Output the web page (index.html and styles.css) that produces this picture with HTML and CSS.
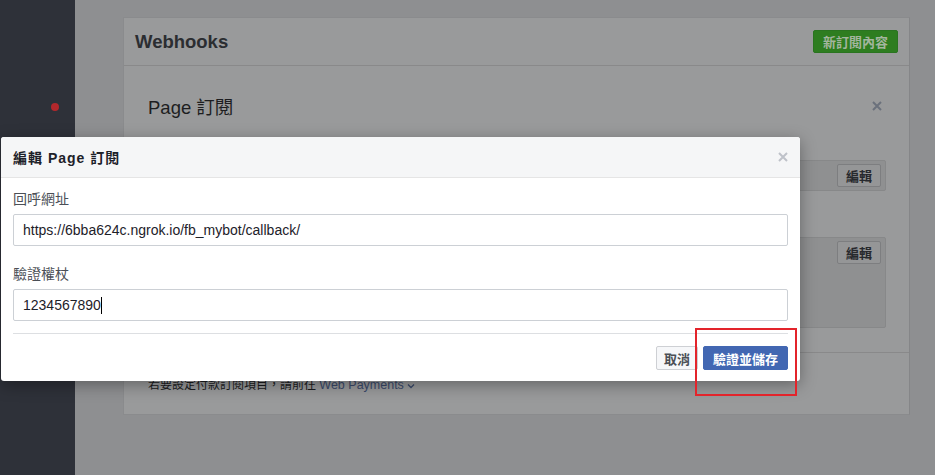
FILE: index.html
```html
<!DOCTYPE html>
<html lang="zh-Hant">

<head>
    <meta charset="UTF-8">
    <meta name="viewport" content="width=device-width, initial-scale=1.0">
    <title>Webhooks</title>
    <link rel="stylesheet" href="styles.css">
</head>

<body>
    <div class="page">
        <aside class="sidebar">
            <span class="dot"></span>
        </aside>
        <main class="main">
            <div class="card">
                <div class="card-header">
                    <h2>Webhooks</h2>
                    <button class="btn-green">新訂閱內容</button>
                </div>
                <div class="card-body">
                    <div class="section-title">
                        <h3>Page 訂閱</h3>
                        <svg class="close-x" width="10" height="10" viewBox="0 0 10 10">
                            <path d="M1 1L9 9M9 1L1 9" stroke="#6b717c" stroke-width="2" />
                        </svg>
                    </div>
                    <div class="sub-box first">
                        <button class="btn-edit">編輯</button>
                    </div>
                    <div class="sub-box tall">
                        <button class="btn-edit">編輯</button>
                    </div>
                </div>
                <div class="card-footer">
                    若要設定付款訂閱項目，請前往 <a href="#" class="link">Web Payments</a>
                    <svg width="8" height="6" viewBox="0 0 8 6">
                        <path d="M1 1.5L4 4.5L7 1.5" stroke="#3b4a6b" stroke-width="1.3" fill="none" />
                    </svg>
                </div>
            </div>
        </main>
    </div>

    <div class="modal">
        <div class="modal-header">
            <span class="modal-title">編輯 Page 訂閱</span>
            <svg width="10" height="10" viewBox="0 0 10 10">
                <path d="M1 1L9 9M9 1L1 9" stroke="#bec2c9" stroke-width="2" />
            </svg>
        </div>
        <div class="modal-body">
            <label class="field-label">回呼網址</label>
            <div class="field">https://6bba624c.ngrok.io/fb_mybot/callback/</div>
            <label class="field-label second">驗證權杖</label>
            <div class="field">1234567890<span class="caret"></span></div>
        </div>
        <div class="modal-footer">
            <button class="btn-cancel">取消</button>
            <button class="btn-primary">驗證並儲存</button>
        </div>
    </div>

    <div class="highlight"></div>
</body>

</html>
```

FILE: styles.css
```css
body {
    margin: 0;
    font-family: "Liberation Sans", Arial, "Noto Sans CJK TC", sans-serif;
    font-size: 14px;
    background-color: #8e8f91;
}

.page {
    display: flex;
    height: 475px;
}

.sidebar {
    width: 75px;
    flex-shrink: 0;
    background-color: #2e3139;
    padding-top: 103px;
    box-sizing: border-box;
}

.dot {
    display: block;
    width: 8px;
    height: 8px;
    margin-left: 51px;
    border-radius: 50%;
    background-color: #b3282c;
}

.main {
    padding: 17px 0 0 48px;
}

.card {
    width: 785px;
    background-color: #999a9b;
    border: 1px solid #8a8b8d;
    border-right-color: #858688;
}

.card-header {
    display: flex;
    justify-content: space-between;
    align-items: center;
    height: 47px;
    padding: 0 11px;
    border-bottom: 1px solid #89898a;
}

.card-header h2 {
    margin: 0;
    font-size: 18.5px;
    font-weight: bold;
    color: #2b2d31;
}

.btn-green {
    height: 23px;
    padding: 0 9px;
    border: 1px solid #2a7420;
    border-radius: 2px;
    background-color: #2e7d20;
    color: #a3b59e;
    font-family: inherit;
    font-size: 13px;
    font-weight: bold;
}

.card-body {
    padding: 28px 23px 24px 23px;
}

.section-title {
    display: flex;
    justify-content: space-between;
    align-items: center;
    height: 24px;
    padding-left: 1px;
}

.section-title h3 {
    margin: 0;
    font-size: 18.5px;
    font-weight: normal;
    color: #1d1e21;
}

.close-x {
    margin-right: 4px;
}

.sub-box {
    display: flex;
    justify-content: flex-end;
    align-items: flex-start;
    margin-top: 46px;
    padding: 3px 4px;
    background-color: #8f9091;
    border: 1px solid #878889;
    border-radius: 2px;
}

.sub-box.first {
    margin-top: 42px;
}

.sub-box.tall {
    height: 83px;
}

.btn-edit {
    height: 23px;
    padding: 0 8px;
    background-color: #959697;
    border: 1px solid #7d7e80;
    border-radius: 2px;
    color: #27292d;
    font-family: inherit;
    font-size: 13px;
    font-weight: bold;
}

.card-footer {
    padding: 22px 24px 19px;
    font-size: 12px;
    line-height: 20px;
    border-top: 1px solid #89898a;
    color: #1b1c1e;
}

.link {
    font-size: 12.5px;
    color: #3b4a6b;
    text-decoration: none;
}

.modal {
    position: absolute;
    left: 1px;
    top: 137px;
    width: 799px;
    background-color: #fff;
    border-radius: 3px;
    box-shadow: 0 4px 16px rgba(0, 0, 0, 0.35);
}

.modal-header {
    display: flex;
    justify-content: space-between;
    align-items: center;
    height: 40px;
    padding: 0 12px;
    background-color: #f5f6f7;
    border-bottom: 1px solid #e5e5e5;
    border-radius: 3px 3px 0 0;
}

.modal-title {
    font-weight: bold;
    letter-spacing: 1px;
    color: #1d2129;
}

.modal-body {
    padding: 11px 12px 12px;
}

.field-label {
    display: block;
    line-height: 20px;
    margin-bottom: 5px;
    color: #4b4f56;
}

.field-label.second {
    margin-top: 18px;
}

.field {
    height: 30px;
    line-height: 30px;
    padding: 0 9px;
    border: 1px solid #ccd0d5;
    border-radius: 2px;
    color: #1d2129;
}

.caret {
    display: inline-block;
    width: 1px;
    height: 17px;
    vertical-align: -4px;
    background-color: #000;
}

.modal-footer {
    display: flex;
    justify-content: flex-end;
    gap: 5px;
    margin: 0 12px;
    padding: 12px 0 11px;
    border-top: 1px solid #dddfe2;
}

.btn-cancel {
    height: 24px;
    padding: 0 7px;
    background-color: #f6f7f9;
    border: 1px solid #ced0d4;
    border-radius: 2px;
    color: #4b4f56;
    font-family: inherit;
    font-size: 13px;
    font-weight: bold;
}

.btn-primary {
    height: 24px;
    padding: 0 9px;
    background-color: #4267b2;
    border: 1px solid #4267b2;
    border-radius: 2px;
    color: #fff;
    font-family: inherit;
    font-size: 13px;
    font-weight: bold;
}

.highlight {
    position: absolute;
    left: 695px;
    top: 328px;
    width: 98px;
    height: 64px;
    border: 2px solid #e3242b;
}
```
